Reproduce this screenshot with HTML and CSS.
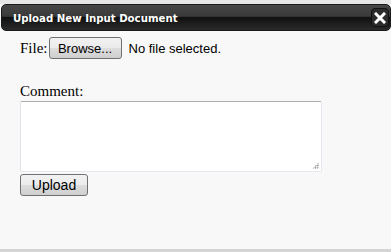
FILE: index.html
```html
<!DOCTYPE html>
<html>
<head>
<meta charset="utf-8">
<link rel="stylesheet" href="styles.css">
</head>
<body>
<div class="page-top"></div>
<div class="dialog">
  <div class="titlebar">
    <span class="title">Upload New Input Document</span>
    <span class="close"><svg width="12" height="12" viewBox="0 0 12 12"><path d="M2 2 L10 10 M10 2 L2 10" stroke="#fff" stroke-width="3" stroke-linecap="square"/></svg></span>
  </div>
  <div class="content">
    <div class="row-file">
      <span class="label">File:</span>
      <span class="btn browse">Browse...</span>
      <span class="nofile">No file selected.</span>
    </div>
    <div class="label comment">Comment:</div>
    <div class="textarea"><span class="grip"></span></div>
    <span class="btn upload">Upload</span>
  </div>
</div>
<div class="page-bottom"></div>
</body>
</html>
```
FILE: styles.css
```css
html, body { margin: 0; padding: 0; }
body { width: 391px; height: 252px; overflow: hidden; background: #f8f8f8; }
.page-top { height: 4px; background: #e6e6e6; }
.dialog { height: 245px; background: #f8f8f8; display: flex; flex-direction: column; }
.titlebar {
  height: 25px; margin: 0 0 0 1px; border: 1px solid #1a1a1a; border-radius: 5px;
  background: linear-gradient(#464646 0%, #3a3a3a 45%, #111 50%, #2a2a2a 100%);
  display: flex; align-items: center; justify-content: space-between; padding: 0 1px 0 11px;
}
.title { font: bold 10.2px "DejaVu Sans", Verdana, sans-serif; color: #fff; margin-top: 1px; }
.close {
  width: 16px; height: 17px; border: 1px solid #111; border-radius: 4px; background: #2c2c2c;
  display: flex; align-items: center; justify-content: center;
}
.content { padding: 6px 0 0 20px; }
.row-file { display: flex; align-items: center; height: 22px; }
.label { font: 15px "Liberation Serif", "Times New Roman", serif; color: #000; }
.btn {
  display: inline-flex; align-items: center; justify-content: center; box-sizing: border-box;
  border: 1px solid #707070; border-radius: 3px;
  background: linear-gradient(#f2f2f2 0%, #ebebeb 50%, #dddddd 50%, #cfcfcf 100%);
  font: 13px "Liberation Sans", Arial, sans-serif; color: #000;
}
.browse { width: 73px; height: 22px; margin-left: 1px; }
.nofile { font: 13px "Liberation Sans", Arial, sans-serif; margin-left: 7px; }
.comment { margin-top: 24px; height: 17px; }
.textarea {
  width: 302px; height: 71px; box-sizing: border-box; margin-top: 1px;
  border: 1px solid #abadb3; border-right-color: #e3e9ef; border-bottom-color: #e3e9ef; border-left-color: #e2e3ea;
  border-radius: 2px; background: #fff; position: relative;
}
.grip {
  position: absolute; right: 2px; bottom: 2px; width: 7px; height: 7px;
  background: radial-gradient(circle, #999 0.7px, transparent 1px) 0 0 / 2.33px 2.33px;
  clip-path: polygon(100% 0, 100% 100%, 0 100%);
}
.upload { width: 68px; height: 22px; margin-top: 2px; font-size: 14px; }
.page-bottom { height: 3px; background: #d4d4d4; }
```
